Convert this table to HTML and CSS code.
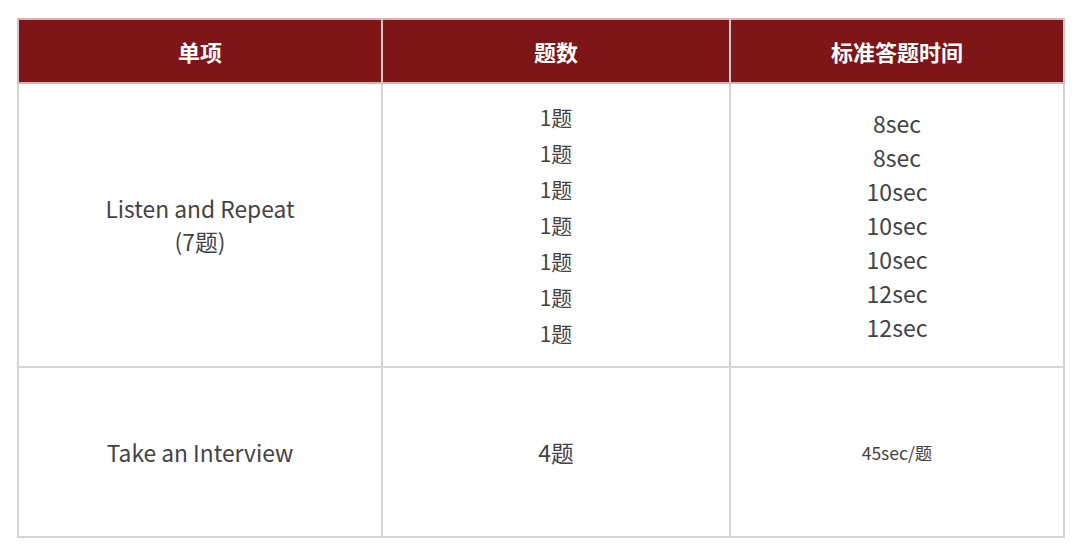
FILE: index.html
```html
<!DOCTYPE html>
<html lang="zh">
<head>
<meta charset="utf-8">
<link rel="stylesheet" href="styles.css">
</head>
<body>
<div class="page">
  <table class="grid">
    <colgroup>
      <col class="c1"><col class="c2"><col class="c3">
    </colgroup>
    <thead>
      <tr class="head">
        <th>单项</th>
        <th>题数</th>
        <th>标准答题时间</th>
      </tr>
    </thead>
    <tbody>
      <tr class="row-a">
        <td class="item">Listen and Repeat<br>(7题)</td>
        <td class="list count">
          <div>1题</div><div>1题</div><div>1题</div><div>1题</div><div>1题</div><div>1题</div><div>1题</div>
        </td>
        <td class="list time">
          <div>8sec</div><div>8sec</div><div>10sec</div><div>10sec</div><div>10sec</div><div>12sec</div><div>12sec</div>
        </td>
      </tr>
      <tr class="row-b">
        <td class="item">Take an Interview</td>
        <td class="item">4题</td>
        <td class="small">45sec/题</td>
      </tr>
    </tbody>
  </table>
</div>
</body>
</html>
```

FILE: styles.css
```css
html, body {
  margin: 0;
  padding: 0;
  background: #ffffff;
}
body {
  font-family: "Noto Sans CJK SC", "Noto Sans", sans-serif;
  color: #434343;
}
.page {
  padding: 18px 0 0 17px;
}
.grid {
  border-collapse: collapse;
  table-layout: fixed;
  width: 1047px;
}
.c1 { width: 364px; }
.c2 { width: 348px; }
.c3 { width: 334px; }
.grid th, .grid td {
  border: 2px solid #d4d4d4;
  text-align: center;
  vertical-align: middle;
  padding: 0;
}
.head th {
  background: #7e1516;
  color: #ffffff;
  font-weight: 700;
  font-size: 22px;
  height: 62px;
  border-color: #d9b3b3;
  border-left-color: #c9c9c9;
  border-right-color: #c9c9c9;
}
.row-a td { height: 282px; }
.row-b td { height: 168px; }
.item {
  font-size: 22.8px;
  line-height: 33px;
}
.count div {
  font-size: 21px;
  line-height: 36px;
}
.time div {
  font-size: 23px;
  line-height: 34px;
}
.small {
  font-size: 17.5px;
}
```
